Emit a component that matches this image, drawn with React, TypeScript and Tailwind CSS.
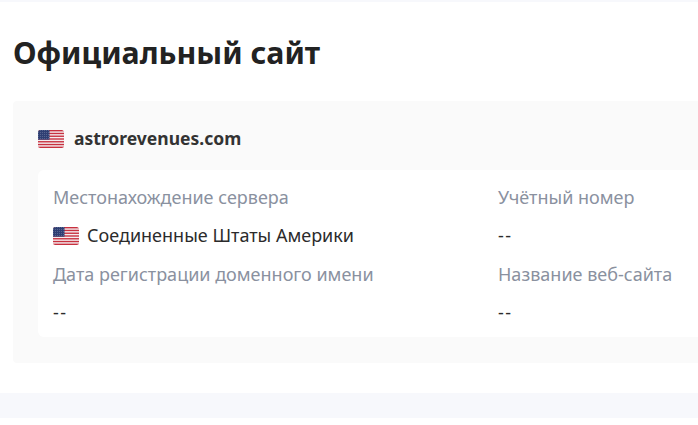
import React from "react";

function UsFlag() {
  const stripes = [0, 2, 4, 6, 8, 10, 12];
  return (
    <svg width="26" height="18" viewBox="0 0 26 18" className="shrink-0">
      <defs>
        <clipPath id="flag-clip">
          <rect width="26" height="18" rx="2.5" />
        </clipPath>
        <pattern id="flag-stars" width="2" height="2" patternUnits="userSpaceOnUse">
          <rect width="1" height="1" fill="#56648f" />
        </pattern>
      </defs>
      <g clipPath="url(#flag-clip)">
        <rect width="26" height="18" fill="#f4eef0" />
        {stripes.map((s) => (
          <rect key={s} y={s * 1.385} width="26" height="1.385" fill="#c8313f" />
        ))}
        <rect width="11.5" height="9.7" fill="#2f3f73" />
        <rect width="11.5" height="9.7" fill="url(#flag-stars)" />
      </g>
    </svg>
  );
}

function Cell({ label, flag, value }: { label: string; flag?: boolean; value: string }) {
  return (
    <div className="w-[445px] shrink-0">
      <div className="h-[38px] flex items-center text-[#8a919f] text-[18px]">{label}</div>
      <div className="h-[39px] flex items-center gap-[8px] text-[#2b2b2b] text-[18px]">
        {flag && <UsFlag />}
        <span className={value === "--" ? "tracking-[1.5px]" : ""}>{value}</span>
      </div>
    </div>
  );
}

export default function App() {
  return (
    <div
      className="w-[698px] h-[425px] overflow-hidden bg-white"
      style={{ fontFamily: '"Noto Sans", "Open Sans", sans-serif' }}>
      <div className="h-[2px] bg-[#f7f8fc]" />
      <div className="pl-[13px]">
        <h2 className="h-[99px] flex items-center pt-[2px] text-[30.3px] font-bold text-[#222222]">
          Официальный сайт
        </h2>
        <div className="w-[720px] h-[262px] bg-[#fafafa] rounded-l-[4px] pl-[25px] pt-[25px]">
          <div className="h-[25px] flex items-center gap-[10px]">
            <UsFlag />
            <span className="text-[17.5px] font-bold text-[#333333]">astrorevenues.com</span>
          </div>
          <div className="mt-[19px] h-[167px] bg-white rounded-l-[6px] pl-[15px] pt-[8px]">
            <div className="flex">
              <Cell label="Местонахождение сервера" flag value="Соединенные Штаты Америки" />
              <Cell label="Учётный номер" value="--" />
            </div>
            <div className="flex">
              <Cell label="Дата регистрации доменного имени" value="--" />
              <Cell label="Название веб-сайта" value="--" />
            </div>
          </div>
        </div>
      </div>
      <div className="mt-[30px] h-[25px] bg-[#f7f8fc]" />
    </div>
  );
}
